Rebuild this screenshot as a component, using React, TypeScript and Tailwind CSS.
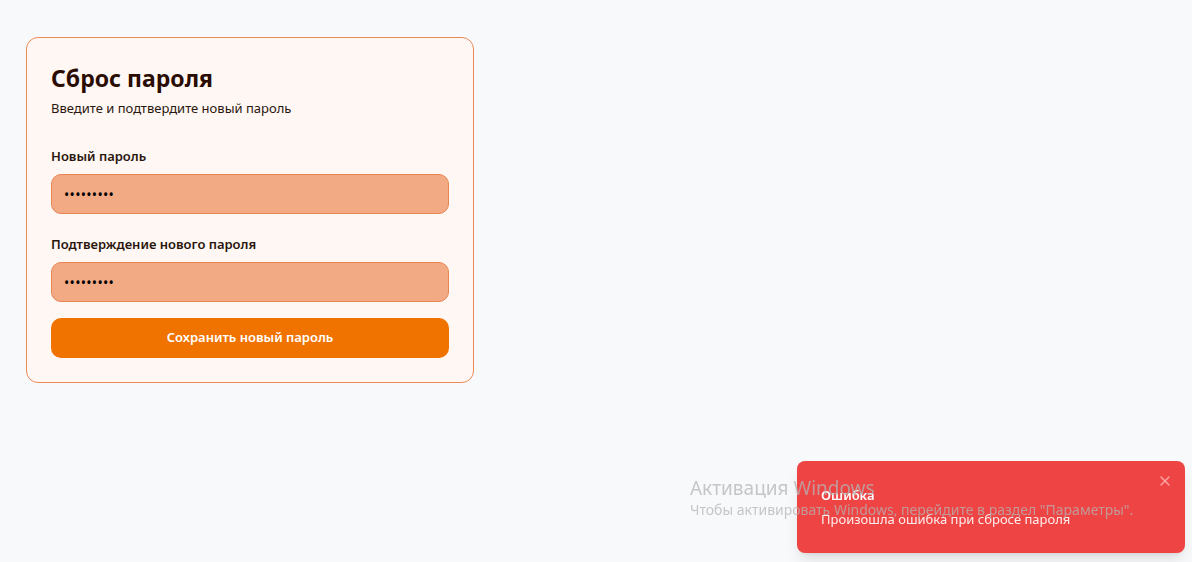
import { X } from "lucide-react";

export default function App() {
  return (
    <div className="min-h-[562px] w-full bg-[#f8f9fb] px-[26px] py-[37px] font-['Noto_Sans',sans-serif]">
      {/* Reset card */}
      <div className="w-[448px] rounded-xl border border-[#ec8a55] bg-[#fff7f4] p-6">
        <h1 className="text-[23px] leading-8 font-bold text-[#2a0c02]">Сброс пароля</h1>
        <p className="mt-1 text-[13px] leading-5 text-[#2a160c]">Введите и подтвердите новый пароль</p>

        <form className="mt-7 space-y-5" onSubmit={(e) => e.preventDefault()}>
          <div>
            <label className="mb-2 block text-[13px] leading-5 font-semibold text-[#2a160c]">Новый пароль</label>
            <input
              type="password"
              defaultValue="123456789"
              className="h-10 w-full rounded-[10px] border border-[#e8854f] bg-[#f2aa85] px-3 text-sm tracking-[0.3px] text-black outline-none"
            />
          </div>
          <div>
            <label className="mb-2 block text-[13px] leading-5 font-semibold text-[#2a160c]">
              Подтверждение нового пароля
            </label>
            <input
              type="password"
              defaultValue="123456789"
              className="h-10 w-full rounded-[10px] border border-[#e8854f] bg-[#f2aa85] px-3 text-sm tracking-[0.3px] text-black outline-none"
            />
          </div>
        </form>

        <button className="mt-4 h-10 w-full rounded-[10px] bg-[#f07300] text-[13px] font-semibold text-white">
          Сохранить новый пароль
        </button>
      </div>

      {/* Toast */}
      <div className="fixed right-[7px] bottom-[9px] w-[388px] rounded-lg bg-[#ef4444] p-6 pr-10 text-white shadow-lg">
        <div className="text-[13px] leading-5 font-semibold">Ошибка</div>
        <div className="mt-1 text-[13px] leading-5 opacity-90">Произошла ошибка при сбросе пароля</div>
        <button className="absolute top-2 right-2 rounded-md p-1 text-[#fca5a5]">
          <X className="h-4 w-4" strokeWidth={2} />
        </button>
      </div>

      {/* Windows watermark */}
      <div className="pointer-events-none fixed left-[690px] top-[476px] z-10 text-[rgba(180,180,180,0.75)]">
        <div className="text-[19px] leading-6">Активация Windows</div>
        <div className="text-[14px] leading-5">Чтобы активировать Windows, перейдите в раздел "Параметры".</div>
      </div>
    </div>
  );
}
